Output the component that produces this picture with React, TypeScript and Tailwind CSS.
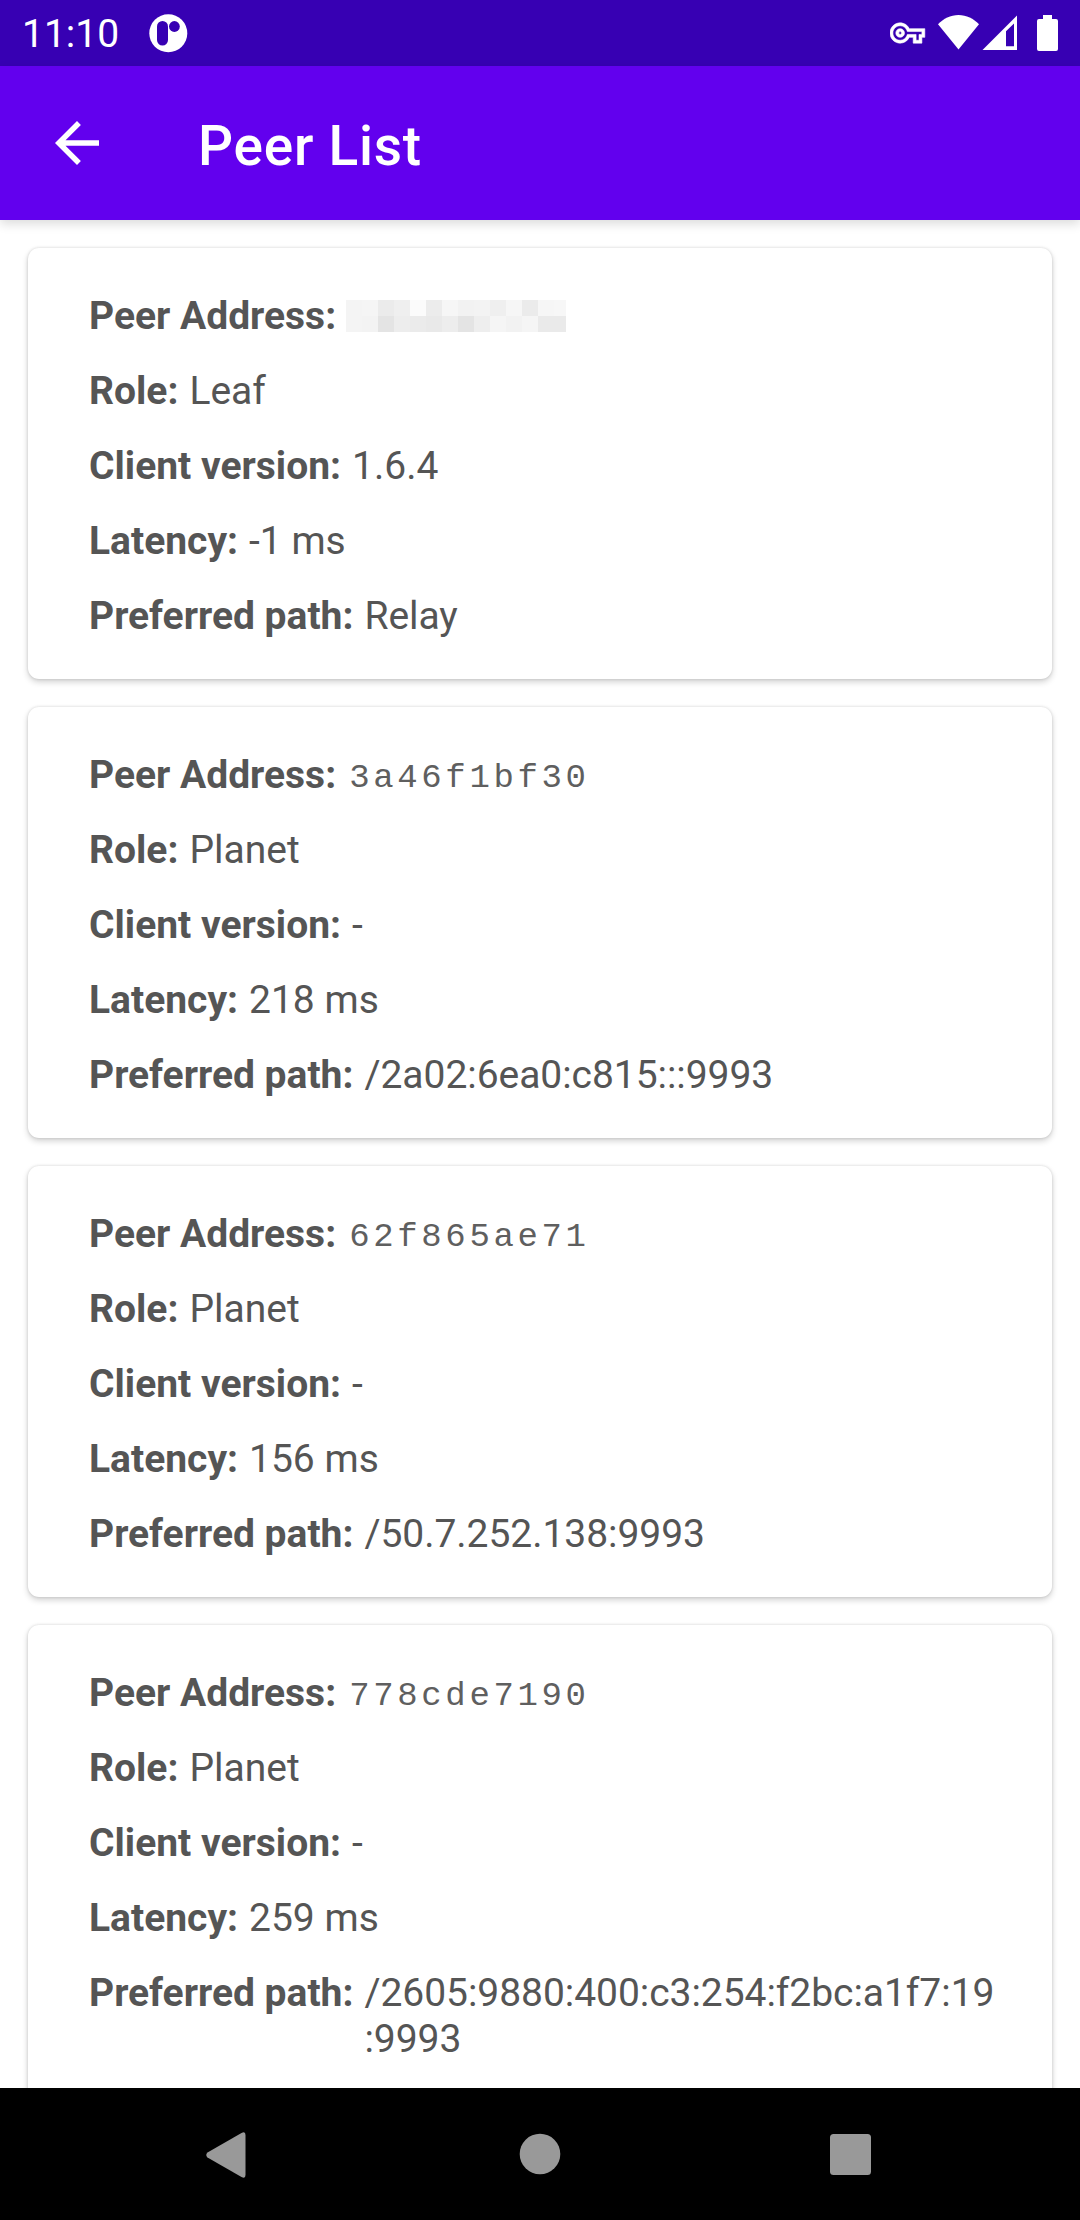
import type { ReactNode } from 'react';

type Peer = {
  address: string | null;
  role: string;
  version: string;
  latency: string;
  path: string;
};

const peers: Peer[] = [
  { address: null, role: 'Leaf', version: '1.6.4', latency: '-1 ms', path: 'Relay' },
  { address: '3a46f1bf30', role: 'Planet', version: '-', latency: '218 ms', path: '/2a02:6ea0:c815:::9993' },
  { address: '62f865ae71', role: 'Planet', version: '-', latency: '156 ms', path: '/50.7.252.138:9993' },
  { address: '778cde7190', role: 'Planet', version: '-', latency: '259 ms', path: '/2605:9880:400:c3:254:f2bc:a1f7:19:9993' },
];

const mosaic = [
  ['#f4f4f4', '#f5f5f5', '#ebebeb', '#efefef', '#fbfbfb', '#ececec', '#f6f6f6', '#f2f2f2', '#f3f3f3', '#efefef', '#f6f6f6', '#ebebeb', '#f6f6f6', '#f7f7f7'],
  ['#f4f4f4', '#f3f3f3', '#e4e4e4', '#ededed', '#ebebeb', '#e9e9e9', '#ededed', '#e4e4e4', '#eeeeee', '#f5f5f5', '#f2f2f2', '#f5f5f5', '#eaeaea', '#eaeaea'],
];

function HiddenAddress() {
  return (
    <div className="mt-[7px] -ml-[1.5px] h-8 w-[220px] overflow-hidden">
      {mosaic.map((row, i) => (
        <div key={i} className="flex h-4">
          {row.map((color, j) => (
            <span key={j} className="h-4 w-4 shrink-0" style={{ backgroundColor: color }} />
          ))}
        </div>
      ))}
    </div>
  );
}

function Row({ label, children }: { label: string; children: ReactNode }) {
  return (
    <div className="flex items-start">
      <span className="mr-[11px] shrink-0 font-bold">{label}</span>
      {children}
    </div>
  );
}

function PeerCard({ peer }: { peer: Peer }) {
  return (
    <section className="flex shrink-0 flex-col gap-[29px] rounded-[11px] bg-white pt-[45px] pr-[52px] pb-10 pl-[61px] shadow-[0_3px_6px_rgba(0,0,0,0.18),0_0_3px_rgba(0,0,0,0.14)]">
      <Row label="Peer Address:">
        {peer.address ? (
          <span className="ml-[2px] mt-[3px] -mb-[3px] font-['Liberation_Mono',monospace] text-[34px] tracking-[3.65px] text-[#5f5f5f]">{peer.address}</span>
        ) : (
          <HiddenAddress />
        )}
      </Row>
      <Row label="Role:"><span>{peer.role}</span></Row>
      <Row label="Client version:"><span>{peer.version}</span></Row>
      <Row label="Latency:"><span>{peer.latency}</span></Row>
      <Row label="Preferred path:"><span className="min-w-0 flex-1 [line-break:anywhere] tracking-[-0.05px]">{peer.path}</span></Row>
    </section>
  );
}

function StatusBar() {
  return (
    <div className="flex h-[66px] shrink-0 bg-[#3700b3] text-white">
      <span className="w-[149px] shrink-0 pl-[22px] pt-[11px] text-[39px] leading-[46px]">11:10</span>
      <svg className="mt-[14px] h-[39px] w-[39px]" viewBox="0 0 39 39">
        <circle cx="19.3" cy="19.3" r="19" fill="white" />
        <rect x="8" y="7" width="11" height="24.5" rx="5.5" fill="#3700b3" />
        <circle cx="25.4" cy="12.5" r="5.4" fill="#3700b3" />
      </svg>
      <svg className="ml-auto h-[66px] w-[190px]" viewBox="890 0 190 66" fill="white">
        <path transform="translate(890 15.6) scale(1.45)" d="M22 19h-6v-4h-2.68c-1.14 2.42-3.6 4-6.32 4-3.86 0-7-3.14-7-7s3.14-7 7-7c2.72 0 5.17 1.58 6.32 4H24v6h-2v4zm-4-2h2v-4h2v-2H11.94l-.23-.67C11.01 8.34 9.11 7 7 7c-2.76 0-5 2.24-5 5s2.24 5 5 5c2.11 0 4.01-1.34 4.71-3.33l.23-.67H18v4zM7 15c-1.65 0-3-1.35-3-3s1.35-3 3-3 3 1.35 3 3-1.35 3-3 3zm0-4c-.55 0-1 .45-1 1s.45 1 1 1 1-.45 1-1-.45-1-1-1z" stroke="white" strokeWidth="0.4" />
        <path d="M938 24.3C943.5 18.5 950.5 15 958.5 15s15 3.500 20.500 9.300L958.500 49.500z" />
        <path fillRule="evenodd" d="M1017 15.500V50H982.500zM1014 23.500L1006 31.300V46.300H1014z" />
        <path d="M1043 15h9v4h4q2 0 2 2v28q0 2-2 2h-17q-2 0-2-2V21q0-2 2-2h4z" />
      </svg>
    </div>
  );
}

function AppBar() {
  return (
    <header className="z-10 flex h-[154px] shrink-0 items-center bg-[#6200ee] pl-11 text-white shadow-[0_4px_10px_rgba(0,0,0,0.14)]">
      <svg className="h-[66px] w-[66px]" viewBox="0 0 24 24" fill="white">
        <path d="M20 11H7.830l5.590-5.590L12 4l-8 8 8 8 1.410-1.410L7.830 13H20v-2z" />
      </svg>
      <h1 className="ml-[88px] mt-[5px] text-[55px] leading-[64px] font-medium tracking-[0.75px]">Peer List</h1>
    </header>
  );
}

function NavigationBar() {
  return (
    <nav className="h-[132px] shrink-0 bg-black">
      <svg className="block h-[132px] w-[1080px]" viewBox="0 0 1080 132" fill="#999999">
        <path d="M207.500 64.500L241.500 45Q245.500 43 245.500 47V87Q245.500 91 241.500 89L207.500 69.500Q205 67 207.500 64.500z" />
        <circle cx="540" cy="66" r="20.300" />
        <rect x="830" y="46" width="41" height="41" rx="3.500" />
      </svg>
    </nav>
  );
}

export default function App() {
  return (
    <div className="flex h-[2220px] w-[1080px] flex-col overflow-hidden bg-white font-[Roboto,sans-serif]">
      <StatusBar />
      <AppBar />
      <main className="flex min-h-0 flex-1 flex-col gap-7 overflow-hidden px-7 pt-7 text-[39px] leading-[46px] text-[#555555]">
        {peers.map((peer, i) => (
          <PeerCard key={i} peer={peer} />
        ))}
      </main>
      <NavigationBar />
    </div>
  );
}
